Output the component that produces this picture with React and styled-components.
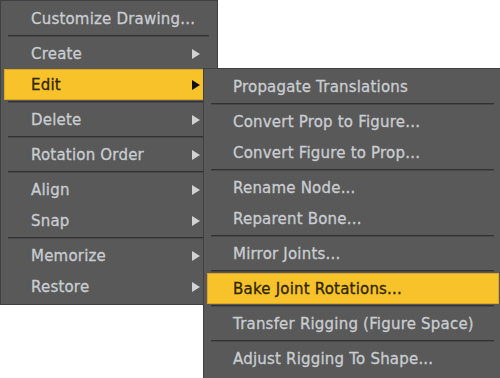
import React from 'react';
import styled, { createGlobalStyle } from 'styled-components';

const Global = createGlobalStyle`
  body {
    margin: 0;
    background: #ffffff;
    font-family: 'DejaVu Sans', 'Liberation Sans', sans-serif;
  }
`;

const Stage = styled.div`
  position: relative;
  width: 500px;
  height: 378px;
  overflow: hidden;
`;

const Menu = styled.ul`
  list-style: none;
  margin: 0;
  padding: 2px 0;
  width: ${p => p.$width}px;
  background: #595959;
  border: 1px solid #404040;
  box-sizing: border-box;
  display: flex;
  flex-direction: column;
`;

// the cascading "Edit" submenu lies over the main menu
const SubMenu = styled(Menu)`
  position: absolute;
  left: 203px;
  top: 68px;
  height: 320px;
`;

const Item = styled.li`
  display: flex;
  align-items: center;
  height: 31px;
  box-sizing: border-box;
  margin: 0 3px;
  padding: 0 ${p => p.$padRight}px 0 ${p => p.$padLeft}px;
  font-size: 15px;
  letter-spacing: 0.2px;
  -webkit-text-stroke: 0.3px ${p => (p.$active ? '#2e2600' : '#c9cdd1')};
  color: ${p => (p.$active ? '#2e2600' : '#c9cdd1')};
  background: ${p => (p.$active ? '#f8c22b' : 'transparent')};
  border: 1px solid ${p => (p.$active ? '#dba722' : 'transparent')};
  white-space: nowrap;
`;

const Label = styled.span`
  flex: 1;
`;

const Arrow = styled.span`
  width: 0;
  height: 0;
  border-top: 5px solid transparent;
  border-bottom: 5px solid transparent;
  border-left: 8px solid ${p => (p.$active ? '#111111' : '#d2d2d2')};
`;

const Separator = styled.li`
  height: 4px;
  display: flex;
  flex-direction: column;
  justify-content: center;
  margin: 0 8px 0 7px;

  &::before {
    content: '';
    display: block;
    height: 1px;
    background: #323232;
  }
  &::after {
    content: '';
    display: block;
    height: 1px;
    background: #494949;
  }
`;

const mainItems = [
  { label: 'Customize Drawing...' },
  'sep',
  { label: 'Create', sub: true },
  { label: 'Edit', sub: true, active: true },
  'sep',
  { label: 'Delete', sub: true },
  'sep',
  { label: 'Rotation Order', sub: true },
  'sep',
  { label: 'Align', sub: true },
  { label: 'Snap', sub: true },
  'sep',
  { label: 'Memorize', sub: true },
  { label: 'Restore', sub: true },
];

const editItems = [
  { label: 'Propagate Translations' },
  'sep',
  { label: 'Convert Prop to Figure...' },
  { label: 'Convert Figure to Prop...' },
  'sep',
  { label: 'Rename Node...' },
  { label: 'Reparent Bone...' },
  'sep',
  { label: 'Mirror Joints...' },
  'sep',
  { label: 'Bake Joint Rotations...', active: true },
  'sep',
  { label: 'Transfer Rigging (Figure Space)' },
  'sep',
  { label: 'Adjust Rigging To Shape...' },
];

function MenuRows({ items, padLeft, padRight }) {
  return items.map((it, i) =>
    it === 'sep' ? (
      <Separator key={i} />
    ) : (
      <Item key={i} $active={it.active} $padLeft={padLeft} $padRight={padRight}>
        <Label>{it.label}</Label>
        {it.sub && <Arrow $active={it.active} />}
      </Item>
    )
  );
}

export default function App() {
  return (
    <Stage>
      <Global />
      <Menu $width={218}>
        <MenuRows items={mainItems} padLeft={26} padRight={13} />
      </Menu>
      <SubMenu $width={300}>
        <MenuRows items={editItems} padLeft={25} padRight={8} />
      </SubMenu>
    </Stage>
  );
}
